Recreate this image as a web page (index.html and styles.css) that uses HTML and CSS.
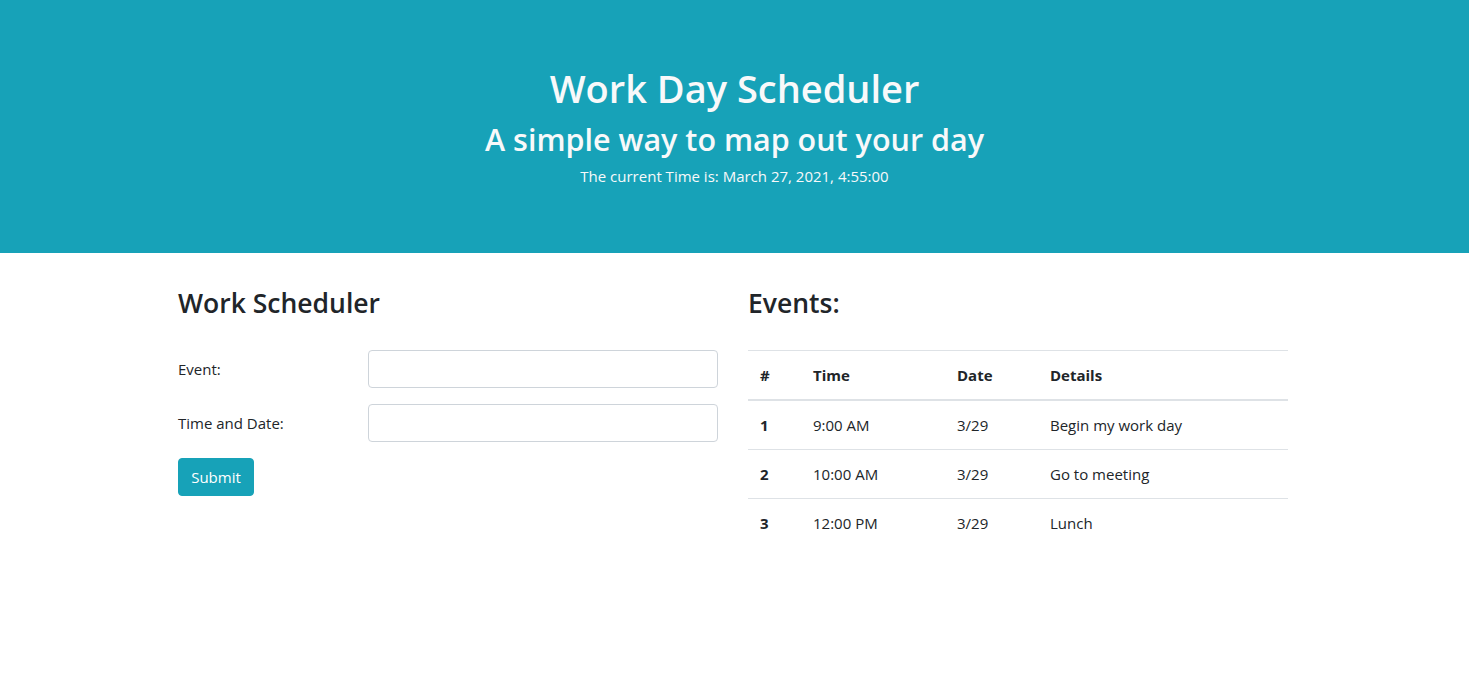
FILE: index.html
```html
<!DOCTYPE html>
<html lang="en">
<head>
<meta charset="utf-8">
<title>Work Day Scheduler</title>
<link rel="stylesheet" href="styles.css">
</head>
<body>
<header class="hero">
  <h1 class="hero-title">Work Day Scheduler</h1>
  <h2 class="hero-sub">A simple way to map out your day</h2>
  <p class="hero-time">The current Time is: March 27, 2021, 4:55:00</p>
</header>
<main class="container">
  <section class="col">
    <h2 class="section-title">Work Scheduler</h2>
    <form class="form">
      <div class="form-row">
        <label class="form-label" for="ev">Event:</label>
        <input class="form-input" id="ev" type="text">
      </div>
      <div class="form-row">
        <label class="form-label" for="td">Time and Date:</label>
        <input class="form-input" id="td" type="text">
      </div>
      <button class="btn" type="button">Submit</button>
    </form>
  </section>
  <section class="col">
    <h2 class="section-title">Events:</h2>
    <table class="table">
      <thead>
        <tr><th class="c1">#</th><th class="c2">Time</th><th class="c3">Date</th><th>Details</th></tr>
      </thead>
      <tbody>
        <tr><th>1</th><td>9:00 AM</td><td>3/29</td><td>Begin my work day</td></tr>
        <tr><th>2</th><td>10:00 AM</td><td>3/29</td><td>Go to meeting</td></tr>
        <tr><th>3</th><td>12:00 PM</td><td>3/29</td><td>Lunch</td></tr>
      </tbody>
    </table>
  </section>
</main>
</body>
</html>
```

FILE: styles.css
```css
* { box-sizing: border-box; }
body {
  margin: 0;
  font-family: "Open Sans", "Noto Sans", sans-serif;
  font-size: 16px;
  line-height: 1.5;
  color: #212529;
  background: #fff;
}
.hero {
  background: #17a2b8;
  color: #f8f9fa;
  text-align: center;
  padding: 65px 16px 48px;
  height: 253px;
}
.hero-title {
  margin: 0 0 8px;
  font-size: 38px;
  font-weight: 600;
  line-height: 46px;
}
.hero-sub {
  margin: 0 0 6px;
  font-size: 30.5px;
  font-weight: 600;
  line-height: 40px;
}
.hero-time {
  margin: 0;
  font-size: 15px;
  line-height: 22px;
}
.container {
  width: 1140px;
  margin: 0 auto;
  padding: 31px 0 0;
  display: flex;
}
.col {
  width: 570px;
  padding: 0 16.5px 0 13.5px;
}
.section-title {
  margin: 0 0 28px;
  font-size: 26.5px;
  font-weight: 600;
  line-height: 38px;
}
.form-row {
  display: flex;
  align-items: center;
  margin-bottom: 16px;
}
.form-label {
  width: 190px;
  font-size: 15px;
}
.form-input {
  flex: 1;
  height: 38px;
  border: 1px solid #ced4da;
  border-radius: 4px;
  padding: 6px 12px;
  font: inherit;
}
.btn {
  width: 76px;
  height: 38px;
  background: #17a2b8;
  color: #fff;
  border: 1px solid #17a2b8;
  border-radius: 4px;
  font: inherit;
  font-size: 15px;
  padding: 0;
}
.table {
  width: 100%;
  border-collapse: collapse;
  font-size: 15px;
}
.table th, .table td {
  padding: 12px 12px;
  line-height: 24px;
  text-align: left;
  border-top: 1px solid #dee2e6;
}
.table th { font-weight: 700; }
.table thead th {
  border-bottom: 2px solid #dee2e6;
}
.c1 { width: 53px; }
.c2 { width: 144px; }
.c3 { width: 93px; }
```
